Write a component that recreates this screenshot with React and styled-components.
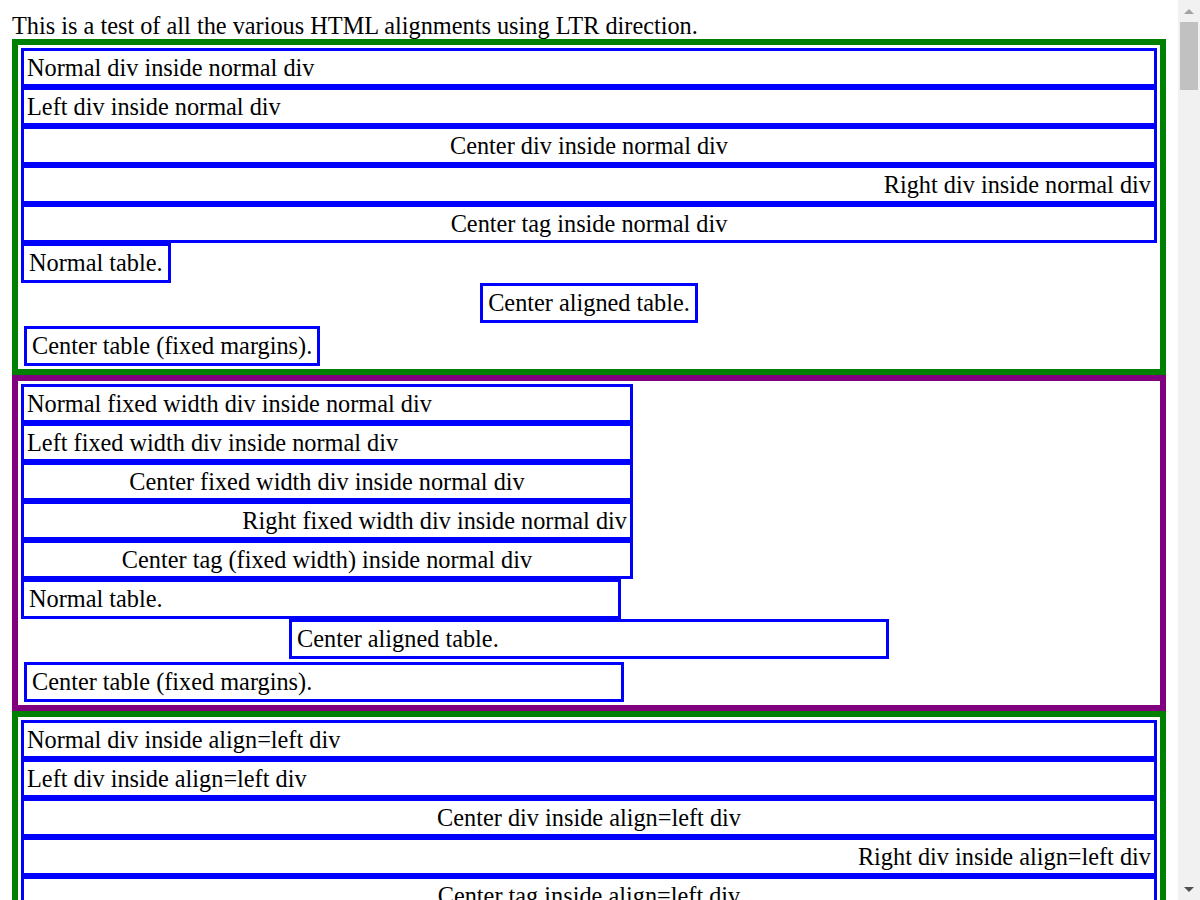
import React from 'react';
import styled, {createGlobalStyle, css} from 'styled-components';

const GlobalStyle = createGlobalStyle`
  html, body {
    margin: 0;
    height: 100%;
    overflow: hidden;
    background: #ffffff;
  }
  body {
    font-family: "Liberation Serif", "Times New Roman", serif;
    font-size: 24.3px;
    line-height: 27px;
    color: #000000;
  }
`

const Window = styled.div`
  display: flex;
  height: 100vh;
`

const Viewport = styled.div`
  flex: 1;
  min-width: 0;
  box-sizing: border-box;
  overflow: hidden;
  padding: 12px;
`

const Scrollbar = styled.div`
  width: 22px;
  flex: none;
  display: flex;
  flex-direction: column;
  background: #f1f1f1;
`

const ArrowButton = styled.div`
  height: 22px;
  flex: none;
  display: flex;
  align-items: center;
  justify-content: center;
  &::before {
    content: "";
    width: 0;
    height: 0;
    border-left: 5px solid transparent;
    border-right: 5px solid transparent;
    ${p => p.$dir === 'up'
      ? css`border-bottom: 5px solid #a3a3a3;`
      : css`border-top: 5px solid #505050;`}
  }
`

const Track = styled.div`
  flex: 1;
  padding: 0 2px;
`

const Thumb = styled.div`
  height: 68px;
  background: #c1c1c1;
`

const Intro = styled.div`
  line-height: 27px;
`

const Section = styled.div`
  border: 6px solid ${p => p.$tone === 'purple' ? '#800080' : '#008000'};
  padding: 3px;
  text-align: ${p => p.$textAlign || 'left'};
`

const placeMargin = place => {
  if (place === 'center') return css`margin-left: auto; margin-right: auto;`
  if (place === 'right') return css`margin-left: auto; margin-right: 0;`
  return css`margin-left: 0; margin-right: auto;`
}

const Row = styled.div`
  border: 3px solid #0000ff;
  padding: 3px;
  line-height: 27px;
  text-align: ${p => p.$align || 'inherit'};
  ${p => p.$fixed && css`
    width: 600px;
    ${placeMargin(p.$place)}
  `}
`

const Table = styled.table`
  border: 3px solid #0000ff;
  border-spacing: 3px;
  border-collapse: separate;
  font-size: 24.3px;
  ${p => p.$fixed && css`width: 600px;`}
  ${p => p.$margins
    ? css`margin: 3px 0 0 3px;`
    : placeMargin(p.$place)}
`

const Cell = styled.td`
  padding: 1px 2px;
  line-height: 26px;
  text-align: ${p => p.$align || 'left'};
`

const containers = [
  {name: 'normal div'},
  {name: 'align=left div'},
  {name: 'align=center div', place: 'center', textAlign: 'center'},
  {name: 'align=right div', place: 'right', textAlign: 'right'},
  {name: 'center tag', place: 'center', textAlign: 'center'},
  {name: 'text-align: left div'},
  {name: 'text-align: center div', textAlign: 'center'},
  {name: 'text-align: right div', textAlign: 'right'},
]

const Block = ({container, fixed}) => {
  const {name, place, textAlign} = container
  const kind = fixed ? 'fixed width div' : 'div'
  return (
    <Section $tone={fixed ? 'purple' : 'green'} $textAlign={textAlign}>
      <Row $fixed={fixed} $place={place}>Normal {kind} inside {name}</Row>
      <Row $fixed={fixed} $place={place} $align="left">Left {kind} inside {name}</Row>
      <Row $fixed={fixed} $place={place} $align="center">Center {kind} inside {name}</Row>
      <Row $fixed={fixed} $place={place} $align="right">Right {kind} inside {name}</Row>
      <Row $fixed={fixed} $place={place} $align="center">
        Center tag {fixed ? '(fixed width) ' : ''}inside {name}
      </Row>
      <Table $fixed={fixed} $place={place}>
        <tbody><tr><Cell>Normal table.</Cell></tr></tbody>
      </Table>
      <Table $fixed={fixed} $place="center">
        <tbody><tr><Cell>Center aligned table.</Cell></tr></tbody>
      </Table>
      <Table $fixed={fixed} $margins>
        <tbody><tr><Cell>Center table (fixed margins).</Cell></tr></tbody>
      </Table>
    </Section>
  )
}

export default function App() {
  return (
    <Window>
      <GlobalStyle/>
      <Viewport>
        <Intro>This is a test of all the various HTML alignments using LTR direction.</Intro>
        {containers.map(c => (
          <React.Fragment key={c.name}>
            <Block container={c}/>
            <Block container={c} fixed/>
          </React.Fragment>
        ))}
      </Viewport>
      <Scrollbar>
        <ArrowButton $dir="up"/>
        <Track><Thumb/></Track>
        <ArrowButton $dir="down"/>
      </Scrollbar>
    </Window>
  )
}
